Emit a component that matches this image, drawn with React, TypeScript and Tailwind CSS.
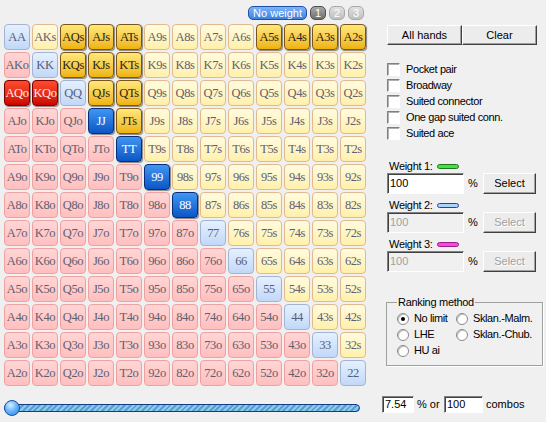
import React from 'react';

const RANKS = ['A', 'K', 'Q', 'J', 'T', '9', '8', '7', '6', '5', '4', '3', '2'];

const SELECTED = new Set([
  'AQs', 'AJs', 'ATs', 'A5s', 'A4s', 'A3s', 'A2s',
  'KQs', 'KJs', 'KTs', 'QJs', 'QTs', 'JTs',
  'AQo', 'KQo',
  'JJ', 'TT', '99', '88',
]);

type Kind = 'pair' | 'suited' | 'offsuit';

const cellStyles: Record<Kind, { off: string; on: string }> = {
  pair: {
    off: 'bg-gradient-to-b from-[#e6f0ff] to-[#c2d8f8] border-[#a3b3d3] text-[#566076]',
    on: 'bg-gradient-to-b from-[#4096f2] to-[#0a56c6] border-[#0a2c78] text-white shadow-[1px_1px_1px_rgba(0,0,0,0.45)]',
  },
  suited: {
    off: 'bg-gradient-to-b from-[#fffbe0] to-[#fff0aa] border-[#e2b98e] text-[#5f6070]',
    on: 'bg-gradient-to-b from-[#ffe878] to-[#eeb400] border-[#7a5418] text-[#2a2410] shadow-[1px_1px_1px_rgba(0,0,0,0.45)]',
  },
  offsuit: {
    off: 'bg-gradient-to-b from-[#ffd6d6] to-[#ffbfbf] border-[#efa0a0] text-[#5f5f6e]',
    on: 'bg-gradient-to-b from-[#ff4a2c] to-[#cc0000] border-[#7a0000] text-[#ffe8ee] shadow-[1px_1px_1px_rgba(0,0,0,0.45)]',
  },
};

function HandCell({ row, col }: { row: number; col: number }) {
  let label: string;
  let kind: Kind;
  if (row === col) {
    label = RANKS[row] + RANKS[col];
    kind = 'pair';
  } else if (col > row) {
    label = RANKS[row] + RANKS[col] + 's';
    kind = 'suited';
  } else {
    label = RANKS[col] + RANKS[row] + 'o';
    kind = 'offsuit';
  }
  const on = SELECTED.has(label);
  const style = on ? cellStyles[kind].on : cellStyles[kind].off;
  return (
    <div
      className={`flex items-center justify-center rounded-[4px] border text-[12.5px] tracking-[-0.4px] ${style}`}
      style={{ fontFamily: '"Liberation Serif", serif' }}
    >
      {label}
    </div>
  );
}

const winButton =
  'flex items-center justify-center bg-[#ececec] border border-t-white border-l-white border-b-[#404040] border-r-[#404040] shadow-[inset_-1px_-1px_0_#a0a0a0]';

const sunken =
  'border border-t-[#808080] border-l-[#808080] border-b-white border-r-white shadow-[inset_1px_1px_0_#404040]';

function Checkbox({ label }: { label: string }) {
  return (
    <div className="flex items-center h-[16px]">
      <div className="w-[13px] h-[13px] bg-white border border-t-[#808080] border-l-[#808080] border-b-white border-r-white shadow-[inset_1px_1px_0_#b0b0b0]" />
      <span className="ml-[6px] whitespace-nowrap tracking-[-0.4px]">{label}</span>
    </div>
  );
}

function WeightRow({ n, bar, disabled }: { n: number; bar: string; disabled?: boolean }) {
  return (
    <div className="flex flex-col">
      <div className="flex items-center h-[13px] ml-[2px]">
        <span className="tracking-[-0.3px]">Weight {n}:</span>
        <div className={`ml-[4px] w-[22px] h-[5px] rounded-full border ${bar}`} />
      </div>
      <div className="flex items-center h-[21px]">
        <div
          className={`w-[77px] h-[21px] flex items-center pl-[2px] ${sunken} ${
            disabled ? 'bg-[#f0f0f0] text-[#a0a0a0]' : 'bg-white text-black'
          }`}
        >
          100
        </div>
        <span className="ml-[4px] w-[15px]">%</span>
        <div className={`${winButton} w-[53px] h-[21px] ${disabled ? 'text-[#a0a0a0] [text-shadow:1px_1px_0_#fff]' : ''}`}>
          Select
        </div>
      </div>
    </div>
  );
}

function Radio({ label, checked }: { label: string; checked?: boolean }) {
  return (
    <div className="flex items-center h-[16px] whitespace-nowrap">
      <div className="w-[12px] h-[12px] shrink-0 rounded-full bg-white border border-[#8a8a8a] shadow-[inset_1px_1px_0_#c0c0c0] flex items-center justify-center">
        {checked && <div className="w-[4px] h-[4px] rounded-full bg-black" />}
      </div>
      <span className="ml-[5px] tracking-[-0.4px]">{label}</span>
    </div>
  );
}

export default function App() {
  return (
    <div
      className="w-[546px] h-[422px] bg-[#f0f0f0] flex text-[11px] text-black overflow-hidden"
      style={{ fontFamily: '"Liberation Sans", Arial, sans-serif' }}
    >
      {/* Left: hand matrix */}
      <div className="w-[366px] pl-[4px] flex flex-col">
        <div className="h-[24px] flex justify-end items-start gap-[3px] pt-[6px] pr-[2px] text-white">
          <div className="h-[14px] px-[4px] flex items-center rounded-[5px] border border-[#1f4fa8] bg-gradient-to-b from-[#7cb4f6] to-[#3a82e0] leading-none">
            No weight
          </div>
          <div className="w-[16px] h-[14px] flex items-center justify-center rounded-[5px] border border-[#505050] bg-gradient-to-b from-[#a8a8a8] to-[#707070] leading-none">
            1
          </div>
          <div className="w-[16px] h-[14px] flex items-center justify-center rounded-[5px] border border-[#a8a8a8] bg-gradient-to-b from-[#e0e0e0] to-[#c0c0c0] leading-none">
            2
          </div>
          <div className="w-[16px] h-[14px] flex items-center justify-center rounded-[5px] border border-[#a8a8a8] bg-gradient-to-b from-[#e0e0e0] to-[#c0c0c0] leading-none">
            3
          </div>
        </div>

        <div className="grid grid-cols-[repeat(13,26px)] grid-rows-[repeat(13,26px)] gap-[2px]">
          {RANKS.map((_, r) => RANKS.map((_, c) => <HandCell key={`${r}-${c}`} row={r} col={c} />))}
        </div>

        {/* Slider */}
        <div className="relative mt-[18px] w-[356px] h-[8px] rounded-full border border-[#163a86] bg-[repeating-linear-gradient(135deg,#5a9ed6_0px,#5a9ed6_2px,#8ccbe6_2px,#8ccbe6_4px)]">
          <div className="absolute -left-[1px] -top-[5px] w-[16px] h-[16px] rounded-full border border-[#1e4f9e] bg-[radial-gradient(circle_at_40%_30%,#d8f0ff_0%,#6ab8ff_45%,#2a7ee0_100%)]" />
        </div>
      </div>

      {/* Right: controls */}
      <div className="w-[164px] ml-[16px] flex flex-col">
        <div className="flex ml-[5px] mt-[25px]">
          <div className={`${winButton} w-[75px] h-[20px]`}>All hands</div>
          <div className={`${winButton} w-[75px] h-[20px]`}>Clear</div>
        </div>

        <div className="flex flex-col ml-[5px] mt-[16px]">
          <Checkbox label="Pocket pair" />
          <Checkbox label="Broadway" />
          <Checkbox label="Suited connector" />
          <Checkbox label="One gap suited conn." />
          <Checkbox label="Suited ace" />
        </div>

        <div className="flex flex-col gap-[5px] ml-[5px] mt-[19px]">
          <WeightRow n={1} bar="bg-[#44e044] border-[#1e7a1e]" />
          <WeightRow n={2} bar="bg-[#a8d4ff] border-[#3a3aa0]" disabled />
          <WeightRow n={3} bar="bg-[#ff44d8] border-[#9a1e8a]" disabled />
        </div>

        <fieldset className="ml-[4px] mt-[22px] w-[155px] h-[72px] border border-[#a0a0a0] shadow-[1px_1px_0_#fff] px-[10px]">
          <legend className="px-[1px] tracking-[-0.3px]">Ranking method</legend>
          <div className="flex">
            <div className="flex flex-col w-[59px]">
              <Radio label="No limit" checked />
              <Radio label="LHE" />
              <Radio label="HU ai" />
            </div>
            <div className="flex flex-col">
              <Radio label="Sklan.-Malm." />
              <Radio label="Sklan.-Chub." />
            </div>
          </div>
        </fieldset>

        <div className="flex items-center mt-[30px] h-[17px]">
          <div className={`w-[32px] h-[17px] bg-white flex items-center pl-[2px] ${sunken}`}>7.54</div>
          <span className="ml-[3px] w-[27px]">% or</span>
          <div className={`w-[39px] h-[17px] bg-white flex items-center pl-[2px] ${sunken}`}>100</div>
          <span className="ml-[3px]">combos</span>
        </div>
      </div>
    </div>
  );
}
